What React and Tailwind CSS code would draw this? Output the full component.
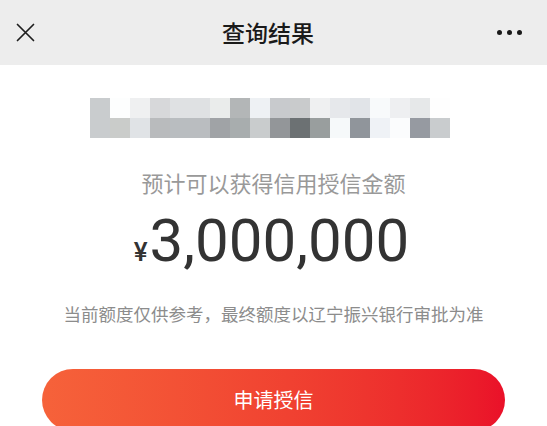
const row1 = ['#c9ccce', '#fdfefe', '#eff0f1', '#d7d8da', '#dfe1e3', '#dfe1e3', '#eaeceb', '#b3b6b7', '#eef1f4', '#c8cacd', '#c9cbcc', '#eff0f1', '#e6e8eb', '#e1e4e8', '#f8fafb', '#eeeff1', '#e6e8e9', '#fefefe']
const row2 = ['#c9ccce', '#caccca', '#e0e3e6', '#b9bbbd', '#b9bdc0', '#babdc0', '#a0a3a6', '#a8adae', '#c9cccd', '#939699', '#6c7173', '#999e9e', '#f6f9fa', '#90959b', '#eff2f6', '#fbfcfd', '#969aa1', '#c9ccce']

const cjk = { fontFamily: "'Noto Sans CJK SC', 'Noto Sans', sans-serif" }

export default function App() {
  return (
    <div className="w-[547px] h-[426px] overflow-hidden bg-white" style={cjk}>
      {/* Header */}
      <header className="h-[65px] bg-[#ededed] flex items-center pl-[16px] pr-[25px]">
        <svg width="19" height="19" viewBox="0 0 19 19" fill="none" stroke="#1e1e1e" strokeWidth="1.7" strokeLinecap="round">
          <path d="M1.5 1.5 L17.5 17.5 M17.5 1.5 L1.5 17.5" />
        </svg>
        <h1 className="flex-1 text-center text-[23px] leading-none font-medium text-[#1a1a1a] pl-[4px]">查询结果</h1>
        <div className="flex items-center gap-[5px]">
          <span className="w-[5px] h-[5px] rounded-full bg-[#1a1a1a]" />
          <span className="w-[5px] h-[5px] rounded-full bg-[#1a1a1a]" />
          <span className="w-[5px] h-[5px] rounded-full bg-[#1a1a1a]" />
        </div>
      </header>

      <main className="flex flex-col items-center">
        {/* Masked name */}
        <div className="mt-[33px] ml-[-7px] grid grid-cols-[repeat(18,20px)] grid-rows-[repeat(2,20px)]">
          {row1.map((c, i) => (
            <div key={'a' + i} style={{ backgroundColor: c }} />
          ))}
          {row2.map((c, i) => (
            <div key={'b' + i} style={{ backgroundColor: c }} />
          ))}
        </div>

        <p className="mt-[30px] text-[22px] leading-[28px] text-[#999999]">预计可以获得信用授信金额</p>

        <div className="mt-[14px] ml-[-4px] flex items-baseline text-[#333333]" style={{ fontFamily: 'Roboto, sans-serif' }}>
          <span className="text-[26px] font-medium mr-[2px]">¥</span>
          <span className="text-[60px] leading-[62px]">3,000,000</span>
        </div>

        <p className="mt-[30px] text-[17.5px] leading-[24px] text-[#8c8c8c]">当前额度仅供参考，最终额度以辽宁振兴银行审批为准</p>

        <button className="mt-[43px] w-[463px] h-[62px] rounded-full bg-gradient-to-r from-[#f6623a] to-[#ea1029] text-white text-[20px] flex items-center justify-center">
          申请授信
        </button>
      </main>
    </div>
  )
}
